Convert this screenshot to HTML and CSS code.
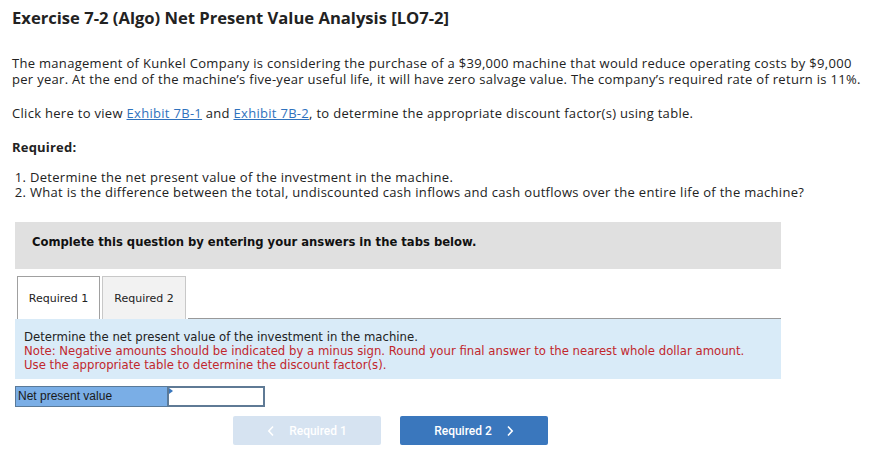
FILE: index.html
```html
<!DOCTYPE html>
<html>
<head>
<meta charset="utf-8">
<link rel="stylesheet" href="styles.css">
</head>
<body>
<div class="page">
  <h1 class="title">Exercise 7-2 (Algo) Net Present Value Analysis [LO7-2]</h1>
  <p class="para">The management of Kunkel Company is considering the purchase of a $39,000 machine that would reduce operating costs by $9,000 per year. At the end of the machine’s five-year useful life, it will have zero salvage value. The company’s required rate of return is 11%.</p>
  <p class="para">Click here to view <a class="link" href="#">Exhibit 7B-1</a> and <a class="link" href="#">Exhibit 7B-2</a>, to determine the appropriate discount factor(s) using table.</p>
  <p class="para req">Required:</p>
  <ol class="list">
    <li>Determine the net present value of the investment in the machine.</li>
    <li>What is the difference between the total, undiscounted cash inflows and cash outflows over the entire life of the machine?</li>
  </ol>
  <div class="complete">Complete this question by entering your answers in the tabs below.</div>
  <div class="tabs">
    <div class="tab active">Required 1</div>
    <div class="tab">Required 2</div>
    <div class="tabline"></div>
  </div>
  <div class="panel">
    <div class="ptext">Determine the net present value of the investment in the machine.</div>
    <div class="ptext red">Note: Negative amounts should be indicated by a minus sign. Round your final answer to the nearest whole dollar amount.</div>
    <div class="ptext red">Use the appropriate table to determine the discount factor(s).</div>
  </div>
  <div class="answer">
    <div class="alabel">Net present value</div>
    <div class="ainput"><span class="flag"></span></div>
  </div>
  <div class="nav">
    <button class="btn prev"><svg class="chev" width="8" height="12" viewBox="0 0 8 12"><polyline points="6,1.5 1.8,6 6,10.5" fill="none" stroke="#fff" stroke-width="1.6"/></svg>Required 1</button>
    <button class="btn next">Required 2<svg class="chev r" width="8" height="12" viewBox="0 0 8 12"><polyline points="2,1.5 6.2,6 2,10.5" fill="none" stroke="#fff" stroke-width="1.6"/></svg></button>
  </div>
</div>
</body>
</html>
```
FILE: styles.css
```css
* { box-sizing: border-box; }
body { margin: 0; background: #fff; font-family: "Open Sans", sans-serif; color: #222; }
.page { padding: 8px 0 0 12px; width: 873px; }
.title { margin: 0; font-size: 16.6px; font-weight: 700; line-height: 20px; color: #222; }
.para { margin: 27px 0 0 0; font-size: 13px; line-height: 16px; width: 861px; letter-spacing: 0.3px; }
.para + .para { margin-top: 18px; }
.para.req { font-weight: 700; margin-top: 18px; letter-spacing: 0.2px; }
.link { color: #2f72bd; text-decoration: underline; }
.list { margin: 15px 0 0 0; padding-left: 18px; font-size: 13px; line-height: 15px; letter-spacing: 0.3px; }
.complete { margin: 22px 0 0 3px; width: 766px; height: 47px; background: #e0e0e0; font-family: "DejaVu Sans", sans-serif; font-weight: 700; font-size: 11.6px; padding: 13px 0 0 17px; color: #111; }
.tabs { display: flex; margin: 7px 0 0 3px; width: 766px; height: 43px; align-items: flex-end; }
.tab { font-family: "DejaVu Sans", sans-serif; font-size: 11px; color: #222; height: 43px; display: flex; align-items: center; justify-content: center; border: 1px solid #c8c8c8; border-bottom: none; background: #f2f2f2; width: 84px; margin-right: 2px; }
.tab.active { background: #fff; border-color: #a0a0a0; width: 83px; margin-left: 2px; margin-right: 2px; }
.tabline { flex: 1; border-bottom: 1px solid #999; }
.panel { margin-left: 3px; width: 766px; height: 60px; background: #d9ebf8; padding: 11px 0 0 9px; font-family: "DejaVu Sans", sans-serif; font-size: 11.7px; line-height: 14px; color: #222; }
.red { color: #c1272d; }
.answer { display: flex; margin: 7px 0 0 3px; height: 21px; }
.alabel { width: 153px; background: #7aaee6; border: 1px solid #5a7a99; font-family: "Liberation Sans", sans-serif; font-size: 12px; padding: 2px 0 0 2px; color: #1a1a1a; }
.ainput { width: 97px; border: 2px solid #5f7a95; border-left-width: 1px; background: #fff; position: relative; }
.flag { position: absolute; left: 0; top: 0; width: 0; height: 0; border-top: 3px solid transparent; border-bottom: 3px solid transparent; border-left: 4px solid #3a77bd; }
.nav { display: flex; gap: 19px; margin: 9px 0 0 221px; }
.btn { width: 148px; height: 29px; border: none; border-radius: 2px; font-family: "Roboto", sans-serif; font-weight: 500; font-size: 12px; color: #fff; display: flex; align-items: center; justify-content: center; padding: 0; }
.btn.prev { background: #d6e3f1; }
.btn.next { background: #3a77bd; }
.chev { margin-right: 14px; }
.chev.r { margin-right: 0; margin-left: 14px; }
```
